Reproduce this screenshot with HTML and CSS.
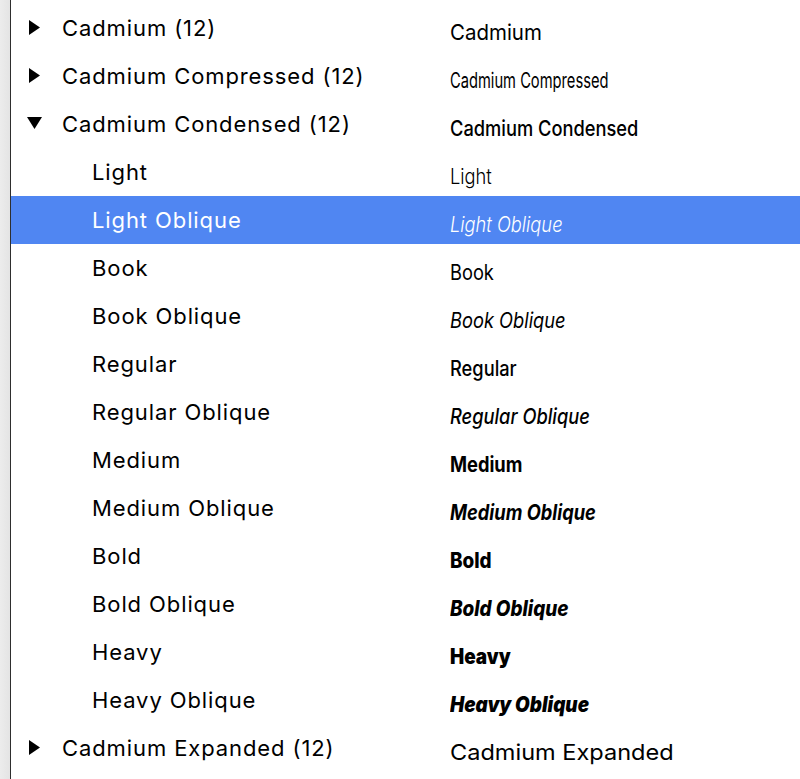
FILE: index.html
```html
<!DOCTYPE html>
<html lang="en">
<head>
    <meta charset="UTF-8">
    <meta name="viewport" content="width=device-width, initial-scale=1.0">
    <title>Font Families</title>
    <link rel="stylesheet" href="styles.css">
</head>
<body>

<div class="window">
    <div class="sidebar-edge"></div>

    <div class="font-list">
        <!-- family rows -->
        <div class="row family">
            <span class="disclosure"><svg width="16" height="16" viewBox="0 0 16 16"><polygon points="2,0 13,7.5 2,15"/></svg></span>
            <span class="name">Cadmium (12)</span>
            <span class="preview"><span class="sample sample-family">Cadmium</span></span>
        </div>
        <div class="row family">
            <span class="disclosure"><svg width="16" height="16" viewBox="0 0 16 16"><polygon points="2,0 13,7.5 2,15"/></svg></span>
            <span class="name">Cadmium Compressed (12)</span>
            <span class="preview"><span class="sample sample-compressed">Cadmium Compressed</span></span>
        </div>
        <div class="row family open">
            <span class="disclosure"><svg width="16" height="16" viewBox="0 0 16 16"><polygon points="0,1 15,1 7.5,13"/></svg></span>
            <span class="name">Cadmium Condensed (12)</span>
            <span class="preview"><span class="sample sample-condensed w-500">Cadmium Condensed</span></span>
        </div>

        <!-- faces of Cadmium Condensed -->
        <div class="row face">
            <span class="name">Light</span>
            <span class="preview"><span class="sample sample-condensed w-300">Light</span></span>
        </div>
        <div class="row face selected">
            <span class="name">Light Oblique</span>
            <span class="preview"><span class="sample sample-condensed w-300 oblique">Light Oblique</span></span>
        </div>
        <div class="row face">
            <span class="name">Book</span>
            <span class="preview"><span class="sample sample-condensed w-400">Book</span></span>
        </div>
        <div class="row face">
            <span class="name">Book Oblique</span>
            <span class="preview"><span class="sample sample-condensed w-400 oblique">Book Oblique</span></span>
        </div>
        <div class="row face">
            <span class="name">Regular</span>
            <span class="preview"><span class="sample sample-condensed w-500">Regular</span></span>
        </div>
        <div class="row face">
            <span class="name">Regular Oblique</span>
            <span class="preview"><span class="sample sample-condensed w-500 oblique">Regular Oblique</span></span>
        </div>
        <div class="row face">
            <span class="name">Medium</span>
            <span class="preview"><span class="sample sample-condensed w-700">Medium</span></span>
        </div>
        <div class="row face">
            <span class="name">Medium Oblique</span>
            <span class="preview"><span class="sample sample-condensed w-700 oblique">Medium Oblique</span></span>
        </div>
        <div class="row face">
            <span class="name">Bold</span>
            <span class="preview"><span class="sample sample-condensed w-800">Bold</span></span>
        </div>
        <div class="row face">
            <span class="name">Bold Oblique</span>
            <span class="preview"><span class="sample sample-condensed w-800 oblique">Bold Oblique</span></span>
        </div>
        <div class="row face">
            <span class="name">Heavy</span>
            <span class="preview"><span class="sample sample-condensed w-900">Heavy</span></span>
        </div>
        <div class="row face">
            <span class="name">Heavy Oblique</span>
            <span class="preview"><span class="sample sample-condensed w-900 oblique">Heavy Oblique</span></span>
        </div>

        <div class="row family">
            <span class="disclosure"><svg width="16" height="16" viewBox="0 0 16 16"><polygon points="2,0 13,7.5 2,15"/></svg></span>
            <span class="name">Cadmium Expanded (12)</span>
            <span class="preview"><span class="sample sample-expanded">Cadmium Expanded</span></span>
        </div>
    </div>
</div>

</body>
</html>
```

FILE: styles.css
```css
html, body {
    margin: 0;
    padding: 0;
    background: #fff;
}
body {
    font-family: "Inter", "Liberation Sans", sans-serif;
    color: #000;
    overflow: hidden;
}
.window {
    display: flex;
    height: 779px;
}
.sidebar-edge {
    width: 10px;
    flex: none;
    background: linear-gradient(to right, #ececec, #e4e4e4);
    border-right: 1px solid #2e2e2e;
}
.font-list {
    flex: 1;
    padding-top: 4px;
}
.row {
    display: flex;
    align-items: center;
    height: 48px;
    font-size: 22px;
}
.row .name { letter-spacing: 0.9px; }
.row.selected { background-color: #5086f2; color: #fff; }
.disclosure {
    width: 16px;
    height: 16px;
    margin-left: 16px;
    margin-right: 19px;
    display: flex;
}
.disclosure svg { fill: #000; }
.row.family .name { width: 388px; }
.row.face .name { width: 358px; padding-left: 81px; }
.preview { flex: 1; white-space: nowrap; padding-top: 8px; }
.sample {
    display: inline-block;
    transform-origin: left center;
    font-family: "Inter", "Roboto", sans-serif;
}
.sample-family { font-size: 22px; font-weight: 400; transform: scaleX(0.93); }
.sample-compressed { font-size: 21px; font-weight: 400; transform: scaleX(0.70); }
.sample-condensed { font-size: 21px; transform: scaleX(0.87); }
.sample-condensed.w-800, .sample-condensed.w-900 { transform: scaleX(0.9); }
.sample-expanded { font-size: 22px; font-weight: 400; transform: scaleX(1.07); }
.w-300 { font-weight: 300; }
.w-400 { font-weight: 400; }
.w-500 { font-weight: 500; }
.w-700 { font-weight: 700; }
.w-800 { font-weight: 800; }
.w-900 { font-weight: 900; }
.oblique { font-style: italic; }
```
